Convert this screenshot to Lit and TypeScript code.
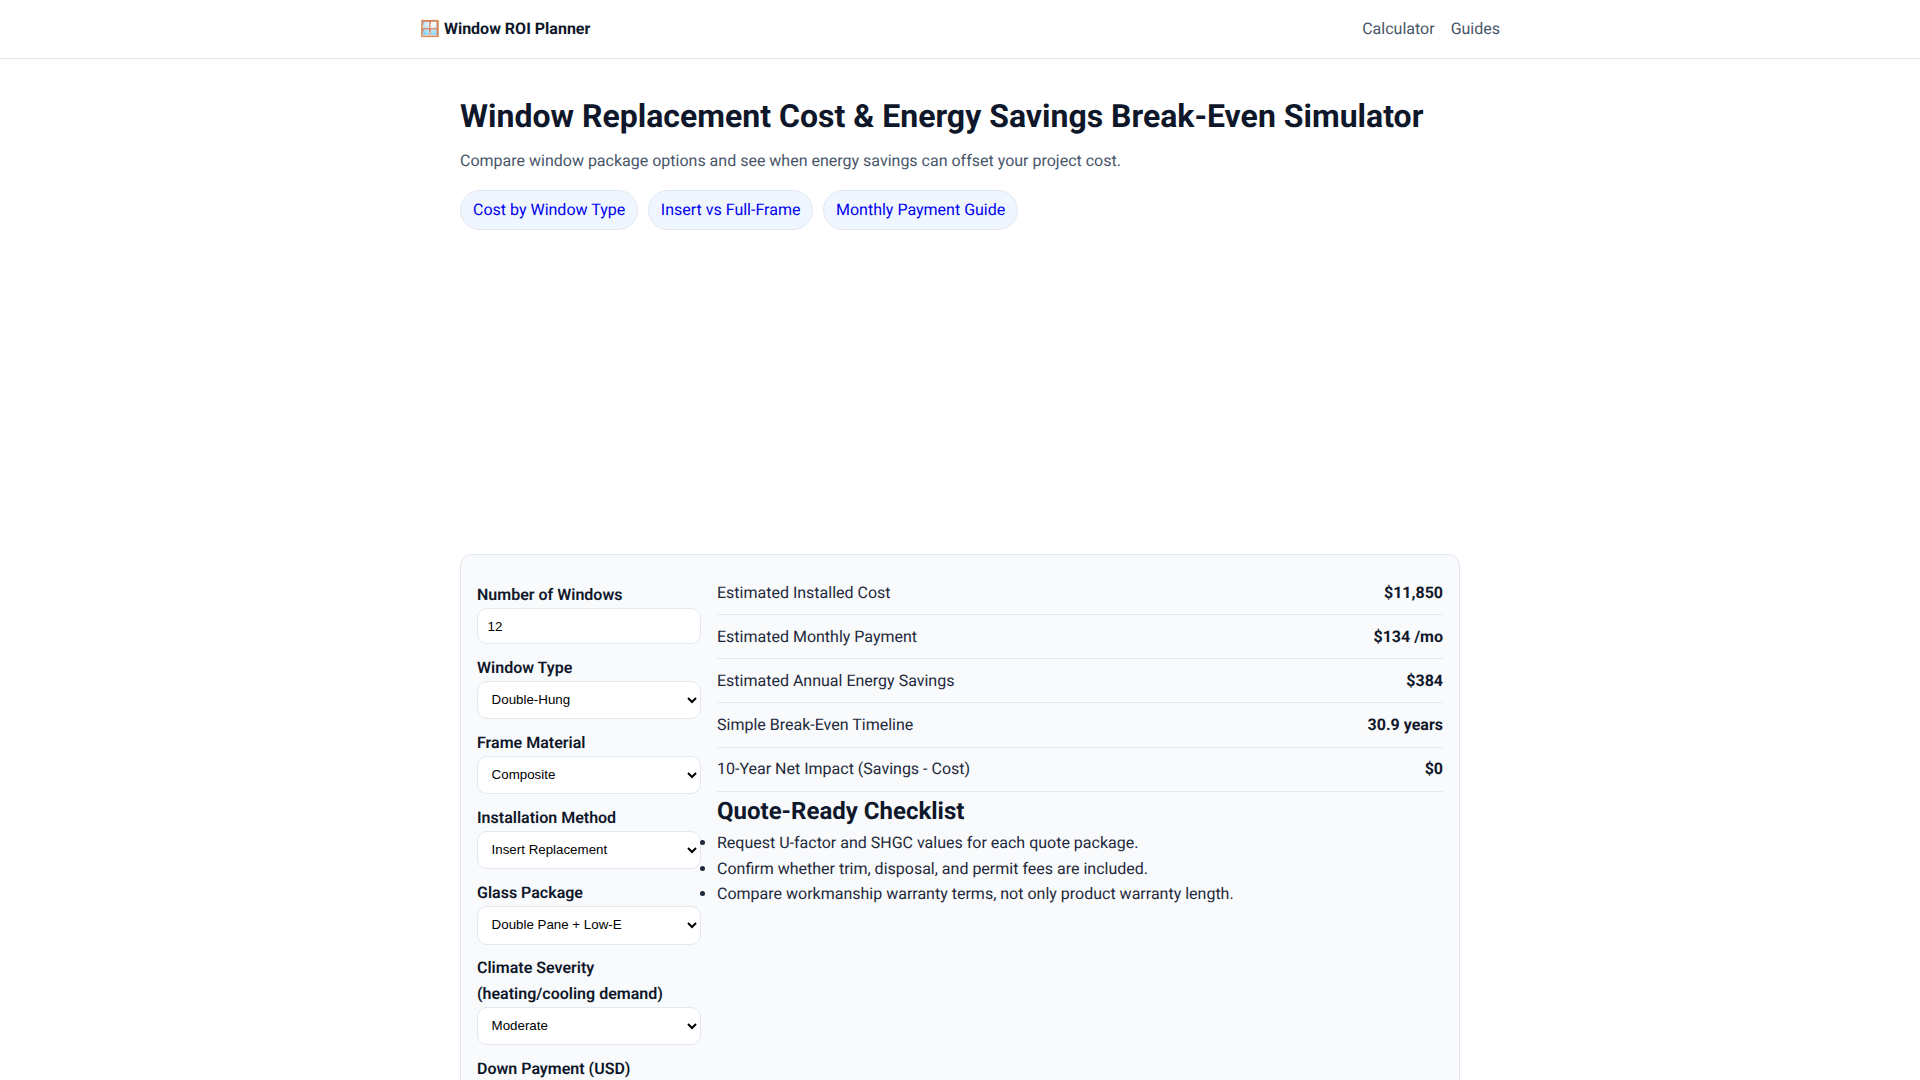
import { LitElement, html, css } from "lit";
import { customElement } from "lit/decorators.js";

const fields: { label: string; value: string; options?: string[] }[] = [
  { label: "Number of Windows", value: "12" },
  { label: "Window Type", value: "Double-Hung", options: ["Double-Hung", "Casement", "Slider", "Picture"] },
  { label: "Frame Material", value: "Composite", options: ["Vinyl", "Composite", "Wood", "Fiberglass"] },
  { label: "Installation Method", value: "Insert Replacement", options: ["Insert Replacement", "Full-Frame Replacement"] },
  { label: "Glass Package", value: "Double Pane + Low-E", options: ["Double Pane", "Double Pane + Low-E", "Triple Pane"] },
  { label: "Climate Severity (heating/cooling demand)", value: "Moderate", options: ["Mild", "Moderate", "Severe"] },
  { label: "Down Payment (USD)", value: "0" },
];
const results = [
  ["Estimated Installed Cost", "$11,850"],
  ["Estimated Monthly Payment", "$134 /mo"],
  ["Estimated Annual Energy Savings", "$384"],
  ["Simple Break-Even Timeline", "30.9 years"],
  ["10-Year Net Impact (Savings - Cost)", "$0"],
];

@customElement("app-root")
export class AppRoot extends LitElement {
  static styles = css`
    :host { display: block; font-family: Roboto, "Liberation Sans", sans-serif; font-size: 16px; line-height: 1.6; color: #0f172a; background: #fff; text-rendering: geometricPrecision; }
    * { box-sizing: border-box; }
    header { border-bottom: 1px solid #e2e8f0; }
    .bar { max-width: 1080px; margin: 0 auto; height: 58px; display: flex; align-items: center; justify-content: space-between; }
    .brand { font-weight: 700; color: #0f172a; text-decoration: none; }
    nav { display: flex; gap: 16px; }
    nav a { color: #475569; text-decoration: none; }
    main { width: 1000px; margin: 0 auto; padding-top: 37px; }
    h1 { font-size: 32px; line-height: 1.3; margin: 0 0 10px; font-weight: 700; }
    .lead { margin: 0 0 17px; color: #475569; }
    .pills { display: flex; gap: 9.6px; }
    .pills a { background: #eff6ff; border: 1px solid #e2e8f0; border-radius: 999px; padding: 6px 12px; text-decoration: none; }
    .ad { height: 324px; }
    .card { background: #f8fafc; border: 1px solid #e2e8f0; border-radius: 12px; padding: 16px; display: grid; grid-template-columns: 224px 1fr; gap: 16px; }
    label { display: block; font-weight: 600; margin-top: 10.8px; margin-bottom: 0.6px; }
    input, select { display: block; width: 100%; background: #fff; border: 1px solid #e2e8f0; border-radius: 10px; color: #000; font-family: "Liberation Sans", Arial, sans-serif; font-size: 13.333px; }
    input { padding: 10.2px 9.6px 9px; }
    select { padding: 9px 9.6px 10.2px; }
    .row { display: flex; justify-content: space-between; padding: 8.8px 0; border-bottom: 1px solid #e2e8f0; color: #1e293b; }
    .row strong { color: #0f172a; }
    h2 { font-size: 24px; line-height: 1.3; margin: 4px 0 3.2px; font-weight: 700; }
    ul { margin: 0; padding: 0; color: #1e293b; }
  `;
  render() {
    return html`
      <header><div class="bar">
        <a class="brand" href="#">🪟 Window ROI Planner</a>
        <nav><a href="#">Calculator</a><a href="#">Guides</a></nav>
      </div></header>
      <main>
        <h1>Window Replacement Cost &amp; Energy Savings Break-Even Simulator</h1>
        <p class="lead">Compare window package options and see when energy savings can offset your project cost.</p>
        <div class="pills">
          <a href="#">Cost by Window Type</a><a href="#">Insert vs Full-Frame</a><a href="#">Monthly Payment Guide</a>
        </div>
        <div class="ad"></div>
        <section class="card">
          <div>
            ${fields.map((f) => html`<label>${f.label}</label>${f.options
              ? html`<select>${f.options.map((o) => html`<option ?selected=${o === f.value}>${o}</option>`)}</select>`
              : html`<input type="number" .value=${f.value} />`}`)}
          </div>
          <div>
            ${results.map((r) => html`<div class="row"><span>${r[0]}</span><strong>${r[1]}</strong></div>`)}
            <h2>Quote-Ready Checklist</h2>
            <ul>
              <li>Request U-factor and SHGC values for each quote package.</li>
              <li>Confirm whether trim, disposal, and permit fees are included.</li>
              <li>Compare workmanship warranty terms, not only product warranty length.</li>
            </ul>
          </div>
        </section>
      </main>
    `;
  }
}
